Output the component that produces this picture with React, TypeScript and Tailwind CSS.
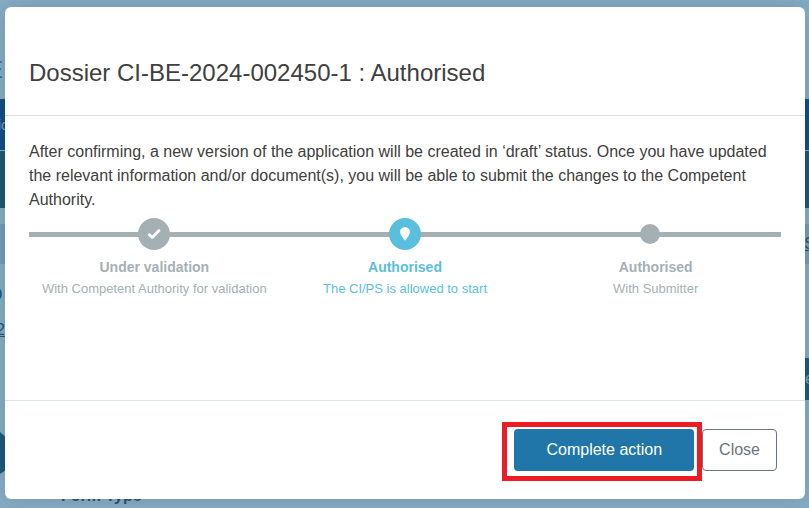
interface Step {
  title: string
  detail: string
  state: 'done' | 'current' | 'pending'
}

const steps: Step[] = [
  { title: 'Under validation', detail: 'With Competent Authority for validation', state: 'done' },
  { title: 'Authorised', detail: 'The CI/PS is allowed to start', state: 'current' },
  { title: 'Authorised', detail: 'With Submitter', state: 'pending' },
]

function CheckIcon() {
  return (
    <svg
      viewBox="0 0 14 12"
      className="h-3 w-3.5"
      fill="none"
      stroke="white"
      strokeWidth="2.8"
      strokeLinecap="round"
      strokeLinejoin="round"
      aria-hidden="true"
    >
      <path d="M2.200 6.700l3.100 2.700 6.700-6.900" />
    </svg>
  )
}

function PinIcon() {
  return (
    <svg viewBox="0 0 10 14" className="h-3.5 w-2.5" fill="white" aria-hidden="true">
      <path d="M5 .3C2.200.3.1 2.300.1 5c0 3 3 5.500 4.200 8.100.3.6 1.100.6 1.400 0C6.900 10.500 9.900 8 9.900 5 9.900 2.300 7.800.3 5 .3z" />
    </svg>
  )
}

function StepMarker({ state }: { state: Step['state'] }) {
  if (state === 'pending') {
    return (
      <span className="flex h-8 w-8 items-center">
        <span className="h-5 w-5 rounded-full bg-[#a5b0b5]" />
      </span>
    )
  }
  return (
    <span
      className={`flex h-8 w-8 items-center justify-center rounded-full ${state === 'current' ? 'bg-[#5abfde]' : 'bg-[#a5b0b5]'}`}
    >
      {state === 'current' ? <PinIcon /> : <CheckIcon />}
    </span>
  )
}

function Stepper() {
  return (
    <div className="relative mt-1.5">
      <div className="absolute inset-x-0 top-3.5 h-[5px] bg-[#a5b0b5]" />
      <ol className="relative grid grid-cols-3">
        {steps.map((s) => (
          <li
            key={s.detail}
            className={`flex flex-col items-center text-center ${s.state === 'current' ? 'text-[#5abfde]' : 'text-[#a5b0b5]'}`}
          >
            <StepMarker state={s.state} />
            <p className="mt-1.5 text-sm leading-[22px] font-bold">{s.title}</p>
            <p className="text-[13px] leading-[22px]">{s.detail}</p>
          </li>
        ))}
      </ol>
    </div>
  )
}

/* Dimmed page that shows round the edges of the dialog */
function PageBehind() {
  return (
    <div className="flex h-full flex-col overflow-hidden text-[#2b5670]" aria-hidden="true">
      <div className="h-[99px] shrink-0 pt-[54px]">
        <span className="-ml-[13px] text-2xl leading-8 text-[#2379a8]">E</span>
      </div>
      <div className="flex h-[51px] shrink-0 items-center bg-[#0f5088]">
        <span className="-ml-0.5 text-sm text-[#7fa3bf]">io</span>
      </div>
      <div className="mt-px h-[57px] shrink-0 bg-[#1f5b77]" />
      <div className="mt-4 flex h-10 shrink-0 items-center justify-end bg-[#769db7]">
        <span className="-mr-1.5 text-base underline">S</span>
      </div>
      <div className="flex h-[94px] shrink-0 flex-col items-start pt-4">
        <span className="-ml-3 text-xl leading-7 font-bold">D</span>
        <span className="mt-2.5 -ml-1 text-base leading-6 underline">2</span>
      </div>
      <div className="-mr-2 flex h-[42px] w-4 shrink-0 items-center self-end bg-[#1d5b7d] pl-1">
        <span className="text-base text-[#7fa3bf]">e</span>
      </div>
      <svg viewBox="0 0 12 44" className="mt-8 h-11 w-3 shrink-0" fill="#1d5b7a">
        <path d="M0 0l12 11v23L0 42z" />
      </svg>
      <p className="mt-2 pl-[61px] text-base leading-6 font-bold">Form Type</p>
    </div>
  )
}

export default function App() {
  return (
    <div className="relative h-screen overflow-hidden bg-[#86adc5] font-['Liberation_Sans',Arial,sans-serif] text-[#404040]">
      <PageBehind />
      <div className="absolute inset-0 flex flex-col pt-[7px] pr-1 pb-[9px] pl-[5px]">
        <div
          role="dialog"
          aria-modal="true"
          aria-labelledby="dialog-title"
          className="flex flex-1 flex-col rounded-md bg-white shadow-[0_0_24px_rgba(0,0,0,0.15)]"
        >
          <header className="border-b border-[#dedede] px-6 pt-12 pb-6">
            <h1 id="dialog-title" className="text-2xl leading-9">
              Dossier CI-BE-2024-002450-1 : Authorised
            </h1>
          </header>

          <main className="flex-1 p-6">
            <p className="text-base leading-6">
              After confirming, a new version of the application will be created in ‘draft’ status. Once you have
              updated the relevant information and/or document(s), you will be able to submit the changes to the
              Competent Authority.
            </p>
            <Stepper />
          </main>

          <footer className="flex items-baseline justify-end border-t border-[#dce0e8] pt-[21px] pr-7 pb-[18px]">
            <div className="flex border-[5px] border-[#ed1c24] pt-0.5 pr-[3px] pb-[5px] pl-[7px]">
              <button type="button" className="h-[42px] rounded bg-[#2076a8] px-8 text-base text-white">
                Complete action
              </button>
            </div>
            <button type="button" className="h-[42px] rounded border border-[#6c757d] px-4 text-base text-[#6c757d]">
              Close
            </button>
          </footer>
        </div>
      </div>
    </div>
  )
}
